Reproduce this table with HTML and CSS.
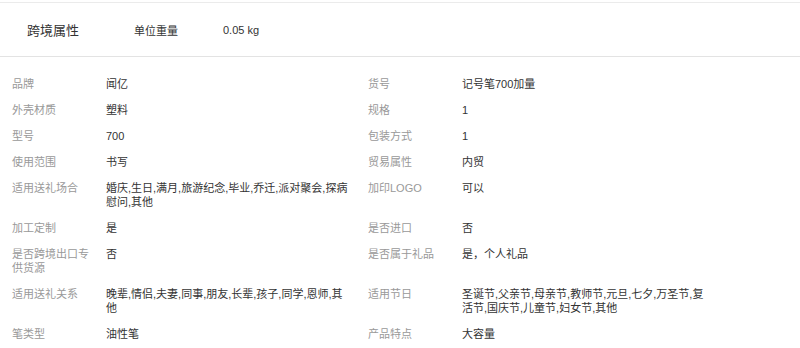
FILE: index.html
```html
<!DOCTYPE html>
<html lang="zh-CN">
<head>
<meta charset="utf-8">
<link rel="stylesheet" href="styles.css">
</head>
<body>
<div class="page">
  <div class="cross">
    <div class="cross-title">跨境属性</div>
    <div class="cross-label">单位重量</div>
    <div class="cross-value">0.05 kg</div>
  </div>
  <div class="attrs">
    <div class="lbl">品牌</div><div class="val">闻亿</div>
    <div class="lbl">货号</div><div class="val">记号笔700加量</div>

    <div class="lbl">外壳材质</div><div class="val">塑料</div>
    <div class="lbl">规格</div><div class="val">1</div>

    <div class="lbl">型号</div><div class="val">700</div>
    <div class="lbl">包装方式</div><div class="val">1</div>

    <div class="lbl">使用范围</div><div class="val">书写</div>
    <div class="lbl">贸易属性</div><div class="val">内贸</div>

    <div class="lbl">适用送礼场合</div><div class="val">婚庆,生日,满月,旅游纪念,毕业,乔迁,派对聚会,探病慰问,其他</div>
    <div class="lbl">加印LOGO</div><div class="val">可以</div>

    <div class="lbl">加工定制</div><div class="val">是</div>
    <div class="lbl">是否进口</div><div class="val">否</div>

    <div class="lbl">是否跨境出口专供货源</div><div class="val">否</div>
    <div class="lbl">是否属于礼品</div><div class="val">是，个人礼品</div>

    <div class="lbl">适用送礼关系</div><div class="val">晚辈,情侣,夫妻,同事,朋友,长辈,孩子,同学,恩师,其他</div>
    <div class="lbl">适用节日</div><div class="val">圣诞节,父亲节,母亲节,教师节,元旦,七夕,万圣节,复活节,国庆节,儿童节,妇女节,其他</div>

    <div class="lbl">笔类型</div><div class="val">油性笔</div>
    <div class="lbl">产品特点</div><div class="val">大容量</div>
  </div>
</div>
</body>
</html>
```

FILE: styles.css
```css
html, body {
  margin: 0;
  padding: 0;
  background: #ffffff;
}

body {
  font-family: "Liberation Sans", "Noto Sans CJK SC", sans-serif;
  color: #333333;
}

.page {
  padding-top: 2px;
}

.cross {
  display: flex;
  align-items: center;
  height: 53px;
  border-top: 1px solid #ebebeb;
  border-bottom: 1px solid #e3e3e3;
  padding-left: 27px;
}

.cross-title {
  font-size: 13px;
  width: 107px;
  color: #333333;
}

.cross-label {
  font-size: 11px;
  width: 89px;
  color: #333333;
}

.cross-value {
  font-size: 11px;
  color: #333333;
}

.attrs {
  display: grid;
  grid-template-columns: 94px 262px 94px 262px;
  row-gap: 12px;
  padding-left: 12px;
  padding-top: 20px;
  font-size: 11px;
  line-height: 14px;
}

.lbl {
  color: #999999;
  padding-right: 12px;
}

.val {
  color: #333333;
  padding-right: 16px;
}
```
